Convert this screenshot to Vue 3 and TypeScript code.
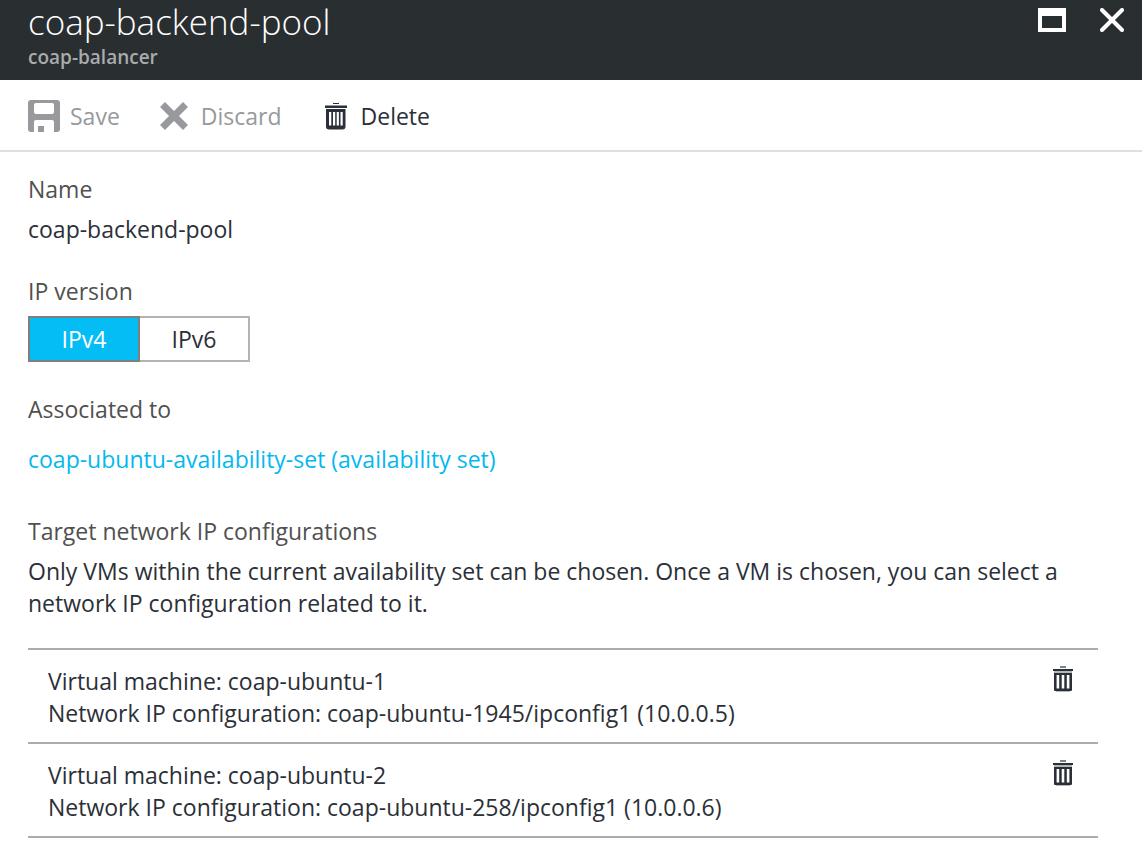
<script setup lang="ts">
import { ref } from 'vue'

interface Target {
  vm: string
  config: string
}

const ipVersion = ref<'IPv4' | 'IPv6'>('IPv4')
const versions = ['IPv4', 'IPv6'] as const
const targets = ref<Target[]>([
  { vm: 'coap-ubuntu-1', config: 'coap-ubuntu-1945/ipconfig1 (10.0.0.5)' },
  { vm: 'coap-ubuntu-2', config: 'coap-ubuntu-258/ipconfig1 (10.0.0.6)' },
])
</script>

<template>
  <div class="blade">
    <header class="header">
      <div>
        <h1 class="title">coap-backend-pool</h1>
        <p class="subtitle">coap-balancer</p>
      </div>
      <div class="window-actions">
        <button type="button" class="icon-button" aria-label="Maximize">
          <svg width="28" height="24" viewBox="0 0 28 24"><path fill="#fff" fill-rule="evenodd" d="M0 0h28v24H0zM4 8v12h20V8z" /></svg>
        </button>
        <button type="button" class="icon-button" aria-label="Close">
          <svg width="24" height="24" viewBox="0 0 24 24"><path stroke="#fff" stroke-width="4" stroke-linecap="round" d="M2 2l20 20M22 2L2 22" /></svg>
        </button>
      </div>
    </header>

    <div class="toolbar" role="toolbar">
      <button type="button" class="command save" disabled>
        <svg width="32" height="32" viewBox="0 0 32 32">
          <path fill="#97999d" fill-rule="evenodd" d="M3 0h26a3 3 0 0 1 3 3v26a3 3 0 0 1-3 3h-3V22a2 2 0 0 0-2-2H8a2 2 0 0 0-2 2v10H3a3 3 0 0 1-3-3V3a3 3 0 0 1 3-3zM8 3a2 2 0 0 0-2 2v7a2 2 0 0 0 2 2h16a2 2 0 0 0 2-2V5a2 2 0 0 0-2-2z" />
          <path fill="#97999d" d="M10 26h6v6h-6z" />
        </svg>
        <span>Save</span>
      </button>
      <button type="button" class="command discard" disabled>
        <svg width="28" height="28" viewBox="0 0 28 28"><path stroke="#97999d" stroke-width="7" d="M2.5 2.5l23 23M25.5 2.5l-23 23" /></svg>
        <span>Discard</span>
      </button>
      <button type="button" class="command delete">
        <svg width="22" height="28" viewBox="0 0 22 28">
          <path fill="#2b3038" fill-rule="evenodd" d="M8 1h6v1H8zM0 3.5h22v2.5H0zM1 7h19.500v17.500a3 3 0 0 1-3 3H4a3 3 0 0 1-3-3zM4 10v13.500h2.300V10zM8 10v13.500h2.200V10zM11.700 10v13.500h2.200V10zM15.500 10v13.500h2.200V10z" />
        </svg>
        <span>Delete</span>
      </button>
    </div>

    <main class="content">
      <section class="group">
        <h2 class="label">Name</h2>
        <p class="value">coap-backend-pool</p>
      </section>

      <fieldset class="group versions">
        <legend class="label">IP version</legend>
        <div class="toggle">
          <label v-for="v in versions" :key="v" class="option" :class="{ selected: v === ipVersion }">
            <input v-model="ipVersion" type="radio" name="ip-version" :value="v" />
            <span>{{ v }}</span>
          </label>
        </div>
      </fieldset>

      <section class="group associated">
        <h2 class="label">Associated to</h2>
        <a href="#" class="link">coap-ubuntu-availability-set (availability set)</a>
      </section>

      <section>
        <h2 class="label">Target network IP configurations</h2>
        <p class="value">
          Only VMs within the current availability set can be chosen. Once a VM is chosen, you can select a network IP configuration related to it.
        </p>
        <ul class="targets">
          <li v-for="t in targets" :key="t.vm" class="target">
            <div>
              <p>Virtual machine: {{ t.vm }}</p>
              <p>Network IP configuration: {{ t.config }}</p>
            </div>
            <button type="button" class="icon-button" :aria-label="`Delete ${t.vm}`">
              <svg width="20" height="26" viewBox="0 0 20 26">
                <path fill="#7f8388" d="M7 0h6v2H7z" />
                <path fill="#b4b8bb" d="M1 5h18v2H1zM3 25h14v1H3z" />
                <path fill="#2b3038" fill-rule="evenodd" d="M0 3h20v2H0zM1 7h18v17a1 1 0 0 1-1 1H2a1 1 0 0 1-1-1zM3.600 9v13.500h2.600V9zM8.700 9v13.500h2.600V9zM13.800 9v13.500h2.600V9z" />
              </svg>
            </button>
          </li>
        </ul>
      </section>
    </main>
  </div>
</template>

<style>
body {
  margin: 0;
  background: #fff;
}
</style>

<style scoped>
.blade {
  font-family: "Open Sans", "Noto Sans", sans-serif;
  font-size: 23px;
  line-height: 32px;
  color: #2b3038;
}
h1, h2, p, ul {
  margin: 0;
  padding: 0;
  font-weight: 400;
}
svg {
  display: block;
  fill: none;
}
button {
  padding: 0;
  border: 0;
  background: none;
  font: inherit;
  color: inherit;
}
.header {
  display: flex;
  justify-content: space-between;
  padding: 0 18px 9px 28px;
  background: #292e31;
  color: #fff;
}
.title {
  font-size: 35px;
  font-weight: 300;
  line-height: 43px;
}
.subtitle {
  font-size: 19px;
  font-weight: 600;
  line-height: 28px;
  color: #a9abad;
}
.window-actions {
  display: flex;
  align-items: flex-start;
  gap: 34px;
  padding-top: 8px;
}
.toolbar {
  display: flex;
  align-items: center;
  padding: 20px 28px 18px;
  border-bottom: 2px solid #dfdfdf;
}
.command {
  display: flex;
  align-items: center;
  gap: 10px;
}
.command:disabled {
  color: #97999d;
}
.discard {
  gap: 13px;
  margin-left: 40px;
}
.delete {
  gap: 14px;
  margin-left: 43px;
}
.content {
  padding: 21px 44px 18px 28px;
}
.group {
  margin-bottom: 30px;
}
.label {
  margin-bottom: 8px;
  font-size: 23px;
  color: #505050;
}
.versions {
  min-width: 0;
  margin: 0 0 31px;
  padding: 0;
  border: 0;
}
.versions .label {
  margin-bottom: 9px;
  padding: 0;
}
.toggle {
  display: flex;
}
.option {
  min-width: 108px;
  padding: 5px 0;
  border: 2px solid #b3b3b3;
  border-left: 0;
  text-align: center;
}
.option.selected {
  border: 2px solid #7f7f7f;
  background: #04bdf5;
  color: #fff;
}
.option input {
  position: absolute;
  opacity: 0;
}
.associated {
  margin-bottom: 40px;
}
.associated .label {
  margin-bottom: 18px;
}
.link {
  display: block;
  color: #04b8ef;
  text-decoration: none;
}
.targets {
  margin-top: 29px;
  border-top: 2px solid #acacac;
  list-style: none;
}
.target {
  display: flex;
  justify-content: space-between;
  align-items: flex-start;
  padding: 15px 25px 13px 20px;
  border-bottom: 2px solid #acacac;
}
.target .icon-button {
  margin-top: 1px;
}
</style>
